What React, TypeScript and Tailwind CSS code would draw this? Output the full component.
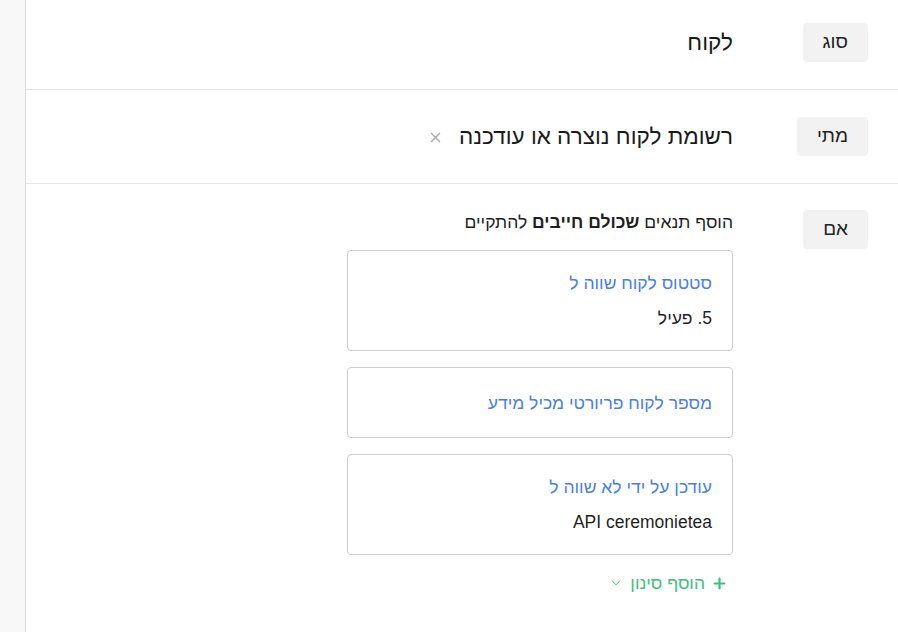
import { Plus, ChevronDown } from 'lucide-react';

const font = { fontFamily: '"Liberation Sans", Arial, sans-serif' };

function Label({ children }: { children: React.ReactNode }) {
  return (
    <div className="flex h-[39px] items-center rounded bg-[#f2f2f2] px-5 text-[19px] text-[#222]">
      {children}
    </div>
  );
}

function Condition({ title, value }: { title: string; value?: string }) {
  return (
    <div
      className={
        value
          ? 'w-[386px] rounded border border-[#cdcdcd] bg-white pl-5 pr-5 pt-[22px] pb-[22px]'
          : 'w-[386px] rounded border border-[#cdcdcd] bg-white pl-5 pr-5 pt-[25px] pb-[24px]'
      }
    >
      <div className="text-[17.5px] leading-[20px] text-[#4a7fe6]">{title}</div>
      {value && <div className="mt-[15px] text-[17.5px] leading-[20px] text-[#1f1f1f]">{value}</div>}
    </div>
  );
}

export default function App() {
  return (
    <div className="flex h-[632px] w-[898px] overflow-hidden bg-white" style={font}>
      <div className="w-[26px] shrink-0 border-r border-[#e0e0e0] bg-[#f8f8f8]" />
      <div dir="rtl" className="flex-1">
        {/* סוג */}
        <div className="flex items-center border-b border-[#e6e6e6] pr-[30px] pt-[23px] pb-[27px]">
          <div className="flex w-[135px] shrink-0">
            <Label>סוג</Label>
          </div>
          <div className="text-[22.5px] text-[#1a1a1a]">לקוח</div>
        </div>

        {/* מתי */}
        <div className="flex items-center border-b border-[#e6e6e6] py-[27px] pr-[30px]">
          <div className="flex w-[135px] shrink-0">
            <Label>מתי</Label>
          </div>
          <div className="flex items-center gap-[18px]">
            <span className="text-[22.5px] text-[#1a1a1a]">רשומת לקוח נוצרה או עודכנה</span>
            <svg width="11" height="11" viewBox="0 0 11 11" className="mt-[2px]">
              <path d="M1 1L10 10M10 1L1 10" stroke="#a9a9a9" strokeWidth="1.4" />
            </svg>
          </div>
        </div>

        {/* אם */}
        <div className="flex items-start pr-[30px] pt-[26px]">
          <div className="flex w-[135px] shrink-0">
            <Label>אם</Label>
          </div>
          <div className="flex flex-col">
            <div className="text-[17.5px] leading-[24px] text-[#1f1f1f]">
              הוסף תנאים <b>שכולם חייבים</b> להתקיים
            </div>
            <div className="mt-4 flex flex-col gap-4">
              <Condition title="סטטוס לקוח שווה ל" value="5. פעיל" />
              <Condition title="מספר לקוח פריורטי מכיל מידע" />
              <Condition title="עודכן על ידי לא שווה ל" value="API ceremonietea" />
            </div>
            <div className="mt-4 flex h-[24px] items-center gap-[6px] pr-[5px] text-[17.5px] text-[#3ac27c]">
              <Plus size={17} strokeWidth={3} />
              <span>הוסף סינון</span>
              <ChevronDown size={14} strokeWidth={1.8} className="mr-[1px] text-[#5cc58f]" />
            </div>
          </div>
        </div>
      </div>
    </div>
  );
}
